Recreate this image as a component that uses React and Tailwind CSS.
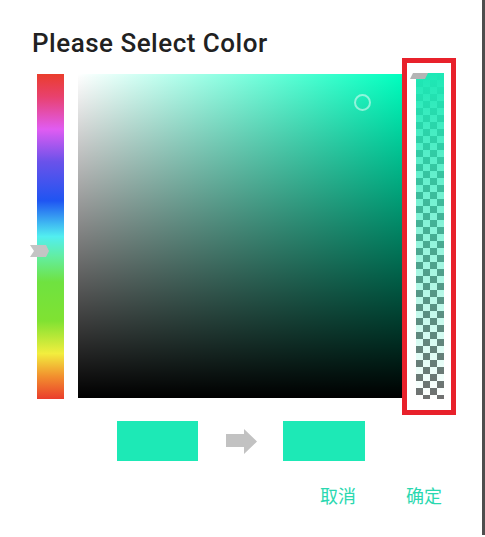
import React from 'react';

const TEAL = '#1de9b6';

function HueBar() {
    return (
        <div className="relative h-[325px] w-[27px] bg-[linear-gradient(to_bottom,#ea3d2c_0%,#e8416e_7%,#e05cf2_17%,#6a52ea_27%,#1f55f2_39%,#3fb8f2_46%,#52eef0_50%,#62eea4_56%,#6fe240_64%,#80e232_76%,#f2ee3e_86%,#f2902e_93%,#ea3d2c_100%)]">
            <svg className="absolute left-[-7px] top-[171px]" width="19" height="12" viewBox="0 0 19 12">
                <polygon points="0,0 16,0 19,6 16,12 0,12 4,6" fill="#c4c4c4" />
            </svg>
        </div>
    );
}

function SatValPanel() {
    return (
        <div className="relative h-[324px] w-[324px] bg-linear-to-r/srgb from-white to-[#00ffbf]">
            <div className="h-full w-full bg-linear-to-t/srgb from-black to-[#00000000]" />
            <div className="absolute left-[276px] top-[20px] h-[17px] w-[17px] rounded-full border-2 border-white/50" />
        </div>
    );
}

function AlphaBar() {
    return (
        <div className="relative -mt-px h-[326px] w-[28px]">
            <div className="h-full w-full bg-[conic-gradient(#707070_25%,#fff_0_50%,#707070_0_75%,#fff_0)] bg-[length:14px_14px]">
                <div className="h-full w-full bg-linear-to-b/srgb from-[#1de9b6] to-[#1de9b600]" />
            </div>
            <svg className="absolute left-[-6px] top-0" width="18" height="6" viewBox="0 0 18 6">
                <polygon points="3,0 18,0 15,6 0,6" fill="#b4b4b4" />
            </svg>
            <div className="absolute -left-[14px] -right-[12px] -top-[15px] -bottom-[16px] border-[5px] border-[#e8212b]" />
        </div>
    );
}

export default function App() {
    return (
        <div className="flex h-[537px] w-[485px] bg-white font-['Roboto','Noto_Sans_CJK_SC',sans-serif]">
            <div className="flex w-[482px] flex-col">
                <h1 className="pl-[32px] pt-[28px] text-[26px] font-medium leading-[30px] tracking-[0.5px] text-[#212121]">Please Select Color</h1>

                <div className="mt-[16px] flex items-start gap-[14px] pl-[37px]">
                    <HueBar />
                    <SatValPanel />
                    <AlphaBar />
                </div>

                <div className="mt-[22px] flex items-center justify-center">
                    <div className="h-[40px] w-[81px]" style={{ backgroundColor: TEAL }} />
                    <svg className="ml-[28px] mr-[26px]" width="31" height="25" viewBox="0 0 31 25">
                        <polygon points="0,5 18,5 18,0 31,12.5 18,25 18,18 0,18" fill="#c2c2c2" />
                    </svg>
                    <div className="h-[40px] w-[82px]" style={{ backgroundColor: TEAL }} />
                </div>

                <div className="mt-[23px] flex justify-end gap-[50px] pr-[40px] text-[18px] leading-[26px] text-[#2ad8b0]">
                    <button>取消</button>
                    <button>确定</button>
                </div>
            </div>
            <div className="h-[535px] w-[3px] bg-[#4e4e4e]" />
        </div>
    );
}
